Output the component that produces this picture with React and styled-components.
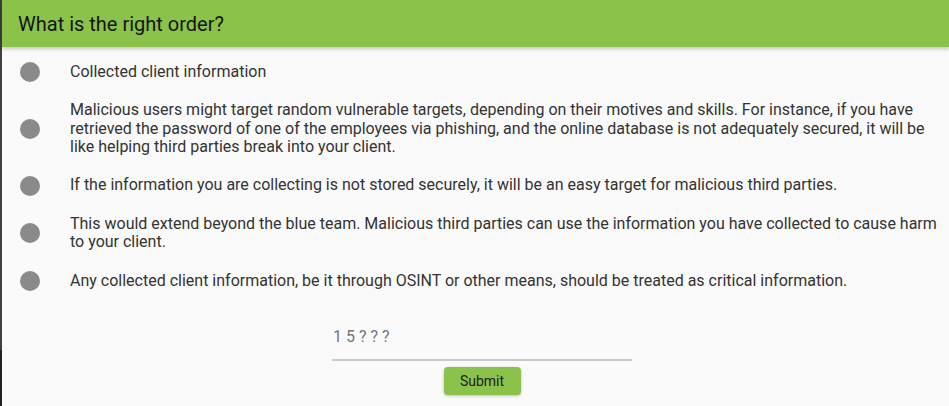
import React from 'react';
import styled, { createGlobalStyle } from 'styled-components';

const GlobalStyle = createGlobalStyle`
  html, body {
    margin: 0;
    padding: 0;
  }
  body {
    font-family: Roboto, "Liberation Sans", Arial, sans-serif;
    background: #fafafa;
  }
`;

const Page = styled.div`
  min-height: 406px;
  padding-left: 2px;
  background: linear-gradient(to bottom, #3d4043 0, #3d4043 350px, #1f2322 350px);
`;

const Card = styled.div`
  min-height: 406px;
  background: #fafafa;
  display: flex;
  flex-direction: column;
`;

const Header = styled.div`
  height: 47px;
  display: flex;
  align-items: center;
  padding-left: 16px;
  background: #8bc34a;
  box-shadow: 0 2px 4px rgba(0, 0, 0, 0.22);
  position: relative;
  z-index: 1;
`;

const Title = styled.h1`
  margin: 0;
  font-size: 20px;
  font-weight: 400;
  color: #141414;
`;

const Options = styled.ul`
  list-style: none;
  margin: 0;
  padding: 15px 9px 0 18px;
  display: flex;
  flex-direction: column;
  gap: 19px;
`;

const Option = styled.li`
  display: grid;
  grid-template-columns: 20px 1fr;
  column-gap: 30px;
  align-items: center;
`;

const Dot = styled.span`
  width: 20px;
  height: 20px;
  border-radius: 50%;
  background: #8a8a8a;
`;

const OptionText = styled.span`
  font-size: 16px;
  line-height: 18.6px;
  color: #333;
`;

const Form = styled.form`
  display: flex;
  flex-direction: column;
  align-items: center;
  padding-left: 13px;
  margin-top: 38px;
`;

const AnswerInput = styled.input`
  width: 300px;
  height: 32px;
  box-sizing: border-box;
  border: none;
  border-bottom: 2px solid #c9c9c9;
  background: transparent;
  padding: 0 1px 14px;
  font-family: inherit;
  font-size: 16px;
  line-height: 16px;
  color: #757575;
  outline: none;
`;

const SubmitButton = styled.button`
  margin-top: 6px;
  width: 77px;
  height: 28px;
  border: none;
  border-radius: 4px;
  background: #8bc34a;
  box-shadow: 0 1px 3px rgba(0, 0, 0, 0.25);
  font-family: inherit;
  font-size: 14px;
  color: #1c1c1c;
  cursor: pointer;
`;

const options = [
  'Collected client information',
  'Malicious users might target random vulnerable targets, depending on their motives and skills. For instance, if you have retrieved the password of one of the employees via phishing, and the online database is not adequately secured, it will be like helping third parties break into your client.',
  'If the information you are collecting is not stored securely, it will be an easy target for malicious third parties.',
  'This would extend beyond the blue team. Malicious third parties can use the information you have collected to cause harm to your client.',
  'Any collected client information, be it through OSINT or other means, should be treated as critical information.',
];

const App = () => (
  <>
    <GlobalStyle />
    <Page>
      <Card>
        <Header>
          <Title>What is the right order?</Title>
        </Header>
        <Options>
          {options.map((text) => (
            <Option key={text}>
              <Dot />
              <OptionText>{text}</OptionText>
            </Option>
          ))}
        </Options>
        <Form onSubmit={(e) => e.preventDefault()}>
          <AnswerInput defaultValue="1 5 ? ? ?" />
          <SubmitButton type="submit">Submit</SubmitButton>
        </Form>
      </Card>
    </Page>
  </>
);

export default App;
